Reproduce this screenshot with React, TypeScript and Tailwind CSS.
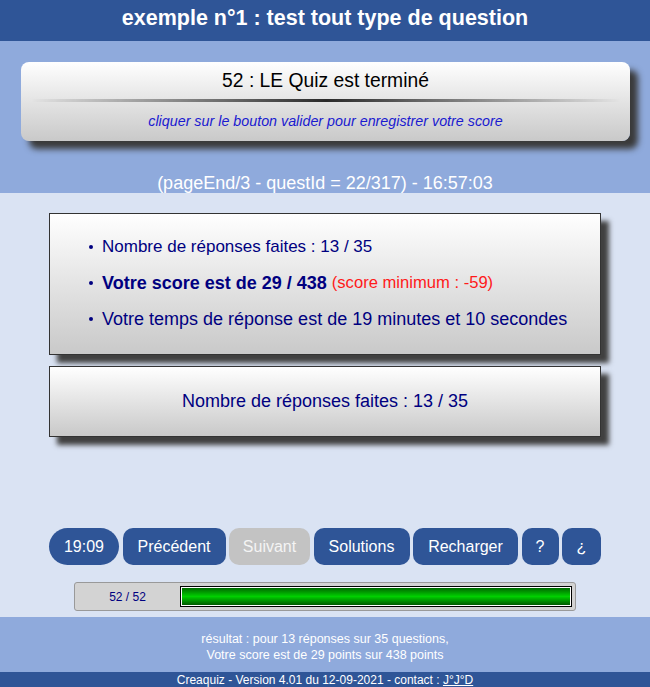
export default function App() {
    const buttons = [
        { label: '19:09', cls: 'w-[70px] rounded-full bg-[#2f5597] text-white' },
        { label: 'Précédent', cls: 'w-[103px] rounded-[10px] bg-[#2f5597] text-white' },
        { label: 'Suivant', cls: 'w-[81px] rounded-[10px] bg-[#c3c3c3] text-[#f4f4f4]' },
        { label: 'Solutions', cls: 'w-[96px] rounded-[10px] bg-[#2f5597] text-white' },
        { label: 'Recharger', cls: 'w-[105px] rounded-[10px] bg-[#2f5597] text-white' },
        { label: '?', cls: 'w-[37px] rounded-[10px] bg-[#2f5597] text-white' },
        { label: '¿', cls: 'w-[39px] rounded-[10px] bg-[#2f5597] text-white' },
    ];

    const dot = <span className="ml-[-1px] mr-[9px] w-[4px] h-[4px] rounded-full bg-[#000080] shrink-0" />;

    return (
        <div className="w-[650px] h-[687px] flex flex-col font-['Liberation_Sans',Arial,sans-serif] bg-[#dae3f3]">
            {/* header */}
            <div className="h-[41px] bg-[#2f5597] flex items-center justify-center">
                <h1 className="text-white text-[21.5px] font-bold leading-none -mt-[4px]">
                    exemple n°1 : test tout type de question
                </h1>
            </div>

            {/* top zone */}
            <div className="bg-[#8faadc] h-[152px] pt-[21px] px-[20px]">
                <div className="ml-[1px] w-[609px] h-[79px] rounded-[8px] bg-linear-to-b from-white to-[#c9c9c9] shadow-[8px_8px_6px_#3a3a3a] flex flex-col items-center pt-[8px]">
                    <div className="text-[19.3px] leading-[22px] text-black">52 : LE Quiz est terminé</div>
                    <div className="w-[590px] h-[3px] mt-[7px] bg-linear-to-r from-transparent via-[#2a2a2a] to-transparent blur-[0.6px]" />
                    <div className="mt-[10px] text-[14.3px] leading-[18px] italic text-[#1a1ad0]">
                        cliquer sur le bouton valider pour enregistrer votre score
                    </div>
                </div>
                <div className="mt-[32px] text-center text-white text-[18px] leading-[20px]">
                    (pageEnd/3 - questId = 22/317) - 16:57:03
                </div>
            </div>

            {/* results */}
            <div className="flex-1 flex flex-col items-center pt-[20px]">
                <div className="w-[552px] h-[142px] border border-[#333] bg-linear-to-b from-white to-[#c9c9c9] shadow-[8px_8px_5px_#404040] pt-[15px]">
                    <ul className="pl-[40px] leading-[36px] text-[#000080]">
                        <li className="flex items-center text-[17px]">
                            {dot}Nombre de réponses faites : 13 / 35
                        </li>
                        <li className="flex items-center">
                            {dot}
                            <b className="text-[18px]">Votre score est de 29 / 438</b>
                            <span className="ml-[5px] text-[16.6px] text-[#ff1a1a]">(score minimum : -59)</span>
                        </li>
                        <li className="flex items-center text-[18px]">
                            {dot}Votre temps de réponse est de 19 minutes et 10 secondes
                        </li>
                    </ul>
                </div>
                <div className="mt-[11px] w-[552px] h-[71px] border border-[#333] bg-linear-to-b from-white to-[#c9c9c9] shadow-[8px_8px_5px_#404040] flex items-center justify-center">
                    <span className="text-[18px] text-[#000080]">Nombre de réponses faites : 13 / 35</span>
                </div>

                <div className="mt-[91px] flex gap-[3.5px]">
                    {buttons.map((b) => (
                        <div key={b.label} className={`h-[37px] flex items-center justify-center text-[16px] ${b.cls}`}>
                            {b.label}
                        </div>
                    ))}
                </div>

                <div className="mt-[17px] w-[502px] h-[29px] border border-[#999] rounded-[3px] bg-[#d3d3d3] flex items-center">
                    <div className="w-[105px] text-center text-[12px] text-[#000080]">52 / 52</div>
                    <div className="w-[392px] h-[21px] border border-black bg-white p-[1px]">
                        <div className="w-full h-full bg-linear-to-b from-[#006a00] via-[#00d000] to-[#005a00]" />
                    </div>
                </div>
            </div>

            {/* footer */}
            <div className="h-[55px] bg-[#8faadc] flex flex-col items-center justify-center pt-[4px] text-white text-[12.5px] leading-[16px]">
                <div>résultat : pour 13 réponses sur 35 questions,</div>
                <div>Votre score est de 29 points sur 438 points</div>
            </div>
            <div className="h-[15px] bg-[#2f5597] flex items-center justify-center text-white text-[12px] leading-none">
                Creaquiz - Version 4.01 du 12-09-2021 - contact :&nbsp;<span className="underline">J°J°D</span>
            </div>
        </div>
    );
}
